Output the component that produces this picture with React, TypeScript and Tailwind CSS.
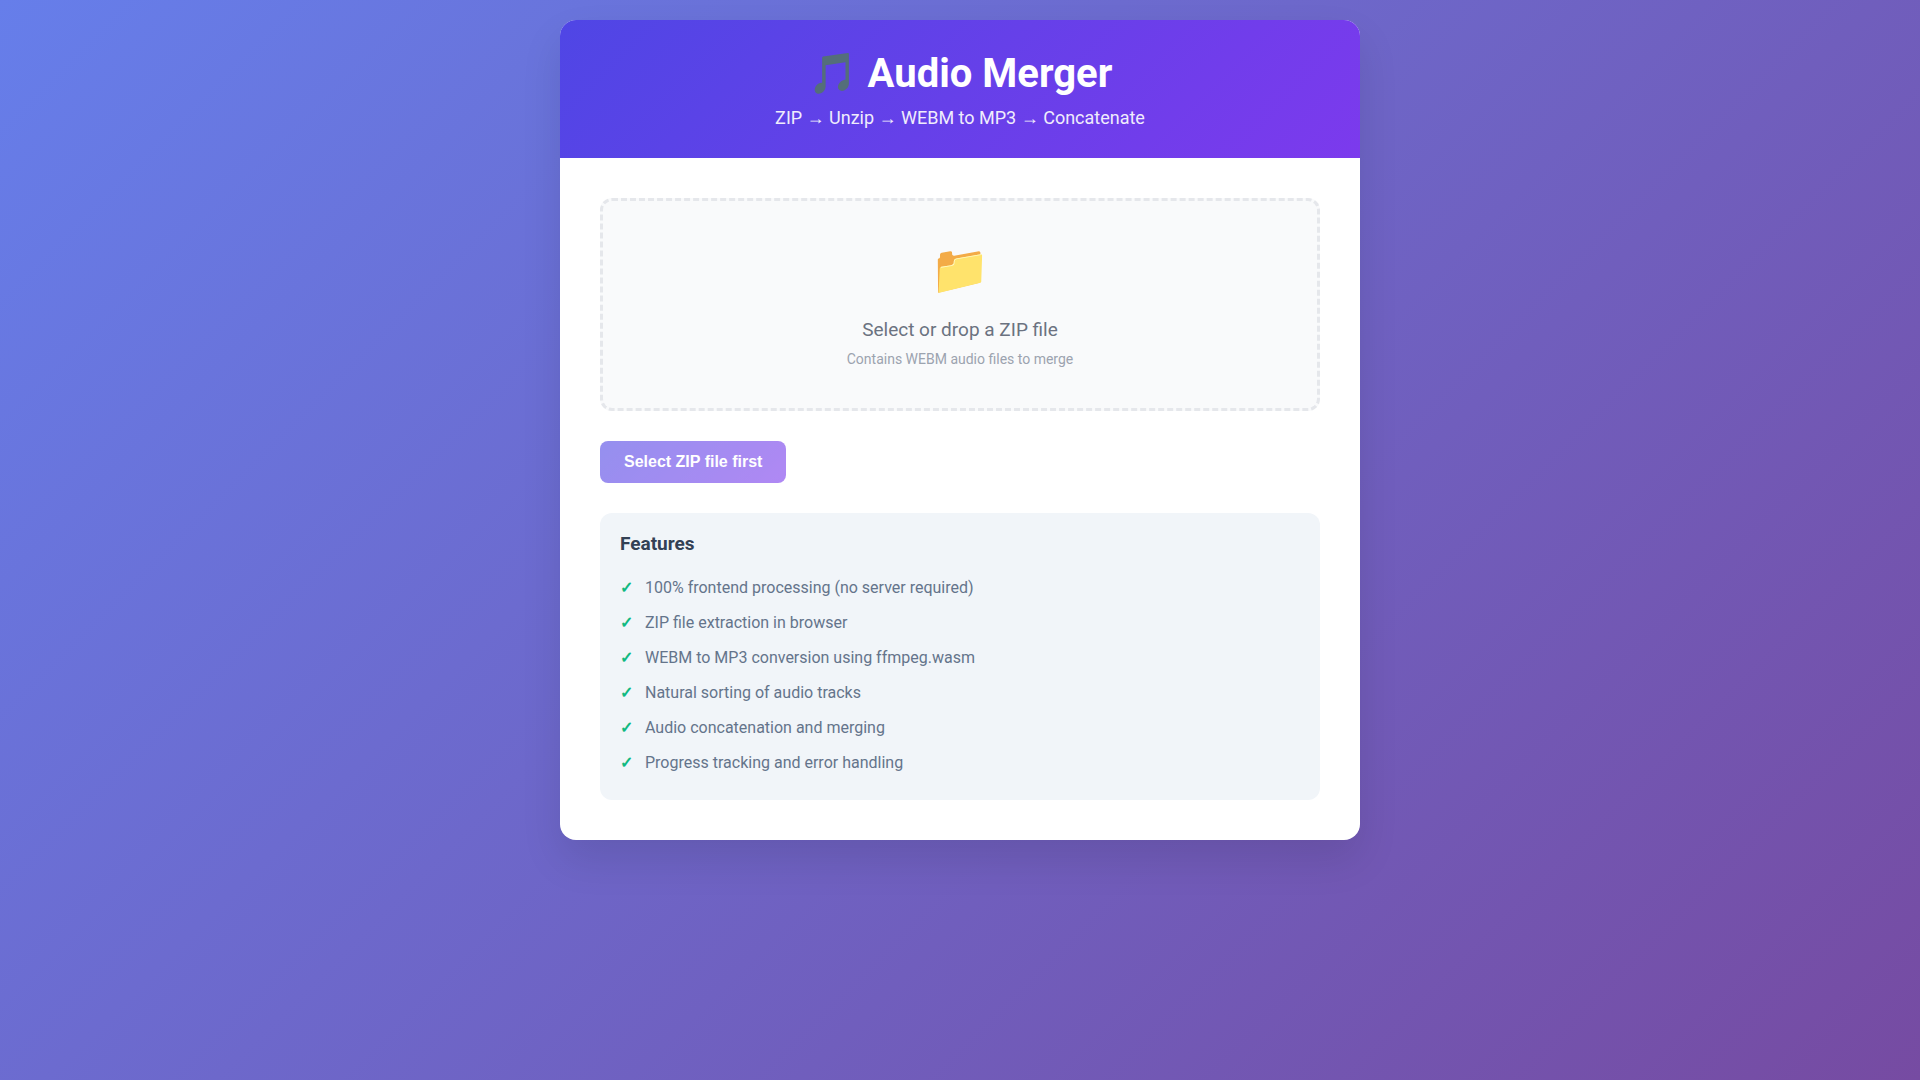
import { useState } from 'react';

const FEATURES = [
  '100% frontend processing (no server required)',
  'ZIP file extraction in browser',
  'WEBM to MP3 conversion using ffmpeg.wasm',
  'Natural sorting of audio tracks',
  'Audio concatenation and merging',
  'Progress tracking and error handling',
];

export default function App() {
  const [file, setFile] = useState<File | null>(null);

  return (
    <div className="min-h-screen p-5 bg-[linear-gradient(135deg,#667eea_0%,#764ba2_100%)] font-[Roboto,sans-serif]">
      <main className="max-w-[800px] mx-auto rounded-2xl overflow-hidden bg-white shadow-[0_20px_40px_rgba(0,0,0,0.1)]">
        <header className="p-[30px] text-center text-white bg-[linear-gradient(135deg,#4f46e5,#7c3aed)]">
          <h1 className="mb-[10px] text-[40px] leading-[47px] font-bold">🎵 Audio Merger</h1>
          <p className="text-lg leading-[21px] opacity-90">ZIP → Unzip → WEBM to MP3 → Concatenate</p>
        </header>

        <div className="p-10">
          <label
            htmlFor="zip-file"
            className="block mb-[30px] p-10 rounded-xl border-3 border-dashed border-[#e5e7eb] bg-[#f9fafb] text-center cursor-pointer"
          >
            <input
              id="zip-file"
              type="file"
              accept=".zip"
              className="sr-only"
              onChange={(e) => setFile(e.target.files?.[0] ?? null)}
            />
            <span className="block mb-5 text-5xl leading-[57px]">📁</span>
            <span className="block mb-[10px] text-[19px] leading-[23px] text-[#6b7280]">Select or drop a ZIP file</span>
            <span className="block text-sm leading-[17px] text-[#9ca3af]">Contains WEBM audio files to merge</span>
          </label>

          <button
            type="button"
            disabled={!file}
            className="block mb-[30px] px-6 py-3 rounded-lg text-base leading-[18px] font-semibold font-[Liberation_Sans,sans-serif] text-white bg-[linear-gradient(135deg,#4f46e5,#7c3aed)] disabled:opacity-60"
          >
            {file ? 'Merge audio' : 'Select ZIP file first'}
          </button>

          <section className="p-5 rounded-xl bg-[#f1f5f9]">
            <h2 className="mb-[15px] text-[19px] leading-[22px] font-bold text-[#334155]">Features</h2>
            <ul>
              {FEATURES.map((feature) => (
                <li key={feature} className="flex py-2 text-base leading-[19px] text-[#64748b]">
                  <span className="w-[25px] font-bold text-[#10b981]">✓</span>
                  {feature}
                </li>
              ))}
            </ul>
          </section>
        </div>
      </main>
    </div>
  );
}
